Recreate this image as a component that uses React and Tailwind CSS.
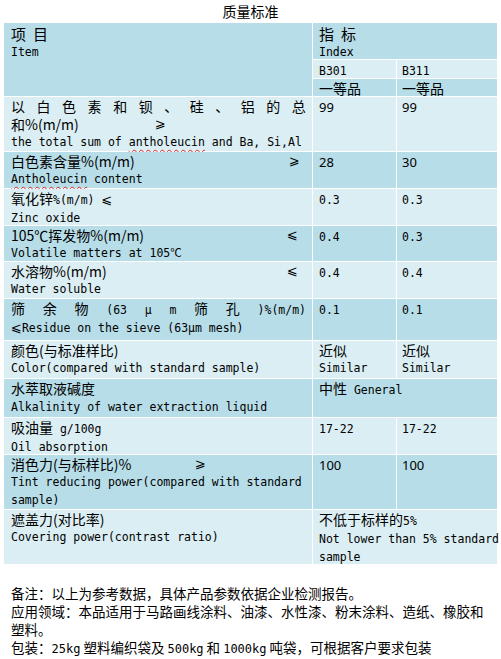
const D = "bg-[#b7dde8]";
const L = "bg-[#dbeef3]";
const cn = "font-['Noto_Sans_CJK_SC',sans-serif] text-[14px]";
const mono = "font-['DejaVu_Sans_Mono','Noto_Sans_CJK_SC',monospace] text-[11.5px]";
const sans = "font-['Noto_Sans','Noto_Sans_CJK_SC',sans-serif] text-[13px]";
const sym = "font-['DejaVu_Sans',sans-serif] text-[13px]";
const wavy = "underline decoration-wavy decoration-[#d22] decoration-1 underline-offset-[3px]";

function C1({ bg, h, children }) {
  return <div className={`${bg} ${h} pl-[7px] pr-[6px] leading-[18px]`}>{children}</div>;
}
function C2({ bg, h, children }) {
  return <div className={`${bg} ${h} pl-[6px] leading-[18px]`}>{children}</div>;
}
function C3({ bg, h, children }) {
  return <div className={`${bg} ${h} pl-[5px] leading-[18px]`}>{children}</div>;
}

export default function App() {
  const r1 = ["以", "白", "色", "素", "和", "钡", "、", "硅", "、", "铝", "的", "总"];
  return (
    <div className="w-[501px] h-[659px] bg-white text-black">
      <div className={`h-[23px] flex items-center justify-center ${cn}`}>质量标准</div>
      <div className="mx-[4px] grid grid-cols-[308px_83px_100px] gap-x-[1px] gap-y-[1px]">
        {/* header */}
        <div className={`${D} row-span-3 pl-[7px] leading-[19px]`}>
          <div className={`${cn} text-[15px] pt-[1px] flex gap-[7px]`}>
            <span>项</span>
            <span>目</span>
          </div>
          <div className={mono}>Item</div>
        </div>
        <div className={`${D} col-span-2 h-[36px] pl-[6px] leading-[19px]`}>
          <div className={`${cn} text-[15px] pt-[1px] flex gap-[7px]`}>
            <span>指</span>
            <span>标</span>
          </div>
          <div className={mono}>Index</div>
        </div>
        <C2 bg={L} h="h-[18px]"><span className={mono}>B301</span></C2>
        <C3 bg={L} h="h-[18px]"><span className={mono}>B311</span></C3>
        <C2 bg={D} h="h-[17px]"><span className={`${cn} leading-[17px]`}>一等品</span></C2>
        <C3 bg={D} h="h-[17px]"><span className={`${cn} leading-[17px]`}>一等品</span></C3>

        {/* r1 */}
        <C1 bg={L} h="h-[54px]">
          <div className={`flex justify-between ${cn}`}>
            {r1.map((c, i) => (
              <span key={i}>{c}</span>
            ))}
          </div>
          <div className="flex">
            <span className={`${cn} w-[144px]`}>和%(m/m)</span>
            <span className={sym}>⩾</span>
          </div>
          <div className={`${mono} whitespace-nowrap`}>
            the total sum of <span className={wavy}>antholeucin</span> and Ba, Si,Al
          </div>
        </C1>
        <C2 bg={L} h="h-[54px]"><span className={sans}>99</span></C2>
        <C3 bg={L} h="h-[54px]"><span className={sans}>99</span></C3>

        {/* r2 */}
        <C1 bg={D} h="h-[36px]">
          <div className="flex justify-between pr-[6px]">
            <span className={cn}>白色素含量%(m/m)</span>
            <span className={sym}>⩾</span>
          </div>
          <div className={mono}>
            <span className={wavy}>Antholeucin</span> content
          </div>
        </C1>
        <C2 bg={D} h="h-[36px]"><span className={sans}>28</span></C2>
        <C3 bg={D} h="h-[36px]"><span className={sans}>30</span></C3>

        {/* r3 */}
        <C1 bg={L} h="h-[36px]">
          <div>
            <span className={cn}>氧化锌</span>
            <span className={mono}>%(m/m) </span>
            <span className={sym}>⩽</span>
          </div>
          <div className={mono}>Zinc oxide</div>
        </C1>
        <C2 bg={L} h="h-[36px]"><span className={mono}>0.3</span></C2>
        <C3 bg={L} h="h-[36px]"><span className={mono}>0.3</span></C3>

        {/* r4 */}
        <C1 bg={D} h="h-[35px]">
          <div className="flex justify-between pr-[8px]">
            <span className={cn}>105℃挥发物%(m/m)</span>
            <span className={sym}>⩽</span>
          </div>
          <div className={mono}>Volatile matters at 105℃</div>
        </C1>
        <C2 bg={D} h="h-[35px]"><span className={mono}>0.4</span></C2>
        <C3 bg={D} h="h-[35px]"><span className={mono}>0.3</span></C3>

        {/* r5 */}
        <C1 bg={L} h="h-[36px]">
          <div className="flex justify-between pr-[8px]">
            <span className={cn}>水溶物%(m/m)</span>
            <span className={sym}>⩽</span>
          </div>
          <div className={mono}>Water soluble</div>
        </C1>
        <C2 bg={L} h="h-[36px]"><span className={mono}>0.4</span></C2>
        <C3 bg={L} h="h-[36px]"><span className={mono}>0.4</span></C3>

        {/* r6 */}
        <C1 bg={D} h="h-[41px]">
          <div className="flex justify-between items-baseline leading-[17px] pt-[1px]">
            <span className={cn}>筛</span>
            <span className={cn}>余</span>
            <span className={cn}>物</span>
            <span className={mono}>(63</span>
            <span className={mono}>μ</span>
            <span className={mono}>m</span>
            <span className={cn}>筛</span>
            <span className={cn}>孔</span>
            <span className={mono}>)%(m/m)</span>
          </div>
          <div className={`${mono} leading-[17px] whitespace-nowrap`}>
            <span className={sym}>⩽</span>Residue on the sieve (63μm mesh)
          </div>
        </C1>
        <C2 bg={D} h="h-[41px]"><span className={mono}>0.1</span></C2>
        <C3 bg={D} h="h-[41px]"><span className={mono}>0.1</span></C3>

        {/* r7 */}
        <C1 bg={L} h="h-[37px]">
          <div className={cn}>颜色(与标准样比)</div>
          <div className={`${mono} whitespace-nowrap`}>Color(compared with standard sample)</div>
        </C1>
        <C2 bg={L} h="h-[37px]">
          <div className={cn}>近似</div>
          <div className={mono}>Similar</div>
        </C2>
        <C3 bg={L} h="h-[37px]">
          <div className={cn}>近似</div>
          <div className={mono}>Similar</div>
        </C3>

        {/* r8 */}
        <C1 bg={D} h="h-[38px]">
          <div className={cn}>水萃取液碱度</div>
          <div className={`${mono} pt-[1px] whitespace-nowrap`}>Alkalinity of water extraction liquid</div>
        </C1>
        <div className={`${D} col-span-2 h-[38px] pl-[6px] leading-[18px]`}>
          <span className={cn}>中性</span>
          <span className={mono}> General</span>
        </div>

        {/* r9 */}
        <C1 bg={L} h="h-[36px]">
          <div>
            <span className={cn}>吸油量</span>
            <span className={mono}> g/100g</span>
          </div>
          <div className={mono}>Oil absorption</div>
        </C1>
        <C2 bg={L} h="h-[36px]"><span className={mono}>17-22</span></C2>
        <C3 bg={L} h="h-[36px]"><span className={mono}>17-22</span></C3>

        {/* r10 */}
        <C1 bg={D} h="h-[54px]">
          <div className="flex">
            <span className={`${cn} w-[184px]`}>消色力(与标样比)%</span>
            <span className={sym}>⩾</span>
          </div>
          <div className={`${mono} whitespace-nowrap`}>Tint reducing power(compared with standard</div>
          <div className={mono}>sample)</div>
        </C1>
        <C2 bg={D} h="h-[54px]"><span className={sans}>100</span></C2>
        <C3 bg={D} h="h-[54px]"><span className={sans}>100</span></C3>

        {/* r11 */}
        <C1 bg={L} h="h-[54px]">
          <div className={cn}>遮盖力(对比率)</div>
          <div className={mono}>Covering power(contrast ratio)</div>
        </C1>
        <div className={`${L} col-span-2 h-[54px] pl-[6px] leading-[18px]`}>
          <div>
            <span className={cn}>不低于标样的</span>
            <span className={mono}>5%</span>
          </div>
          <div className={`${mono} whitespace-nowrap`}>Not lower than 5% standard</div>
          <div className={mono}>sample</div>
        </div>
      </div>

      <div className="mt-[20px] pl-[11px] w-[491px] font-['Noto_Sans_CJK_SC',sans-serif] text-[13.5px] leading-[18px]">
        <div>备注：以上为参考数据，具体产品参数依据企业检测报告。</div>
        <div>应用领域：本品适用于马路画线涂料、油漆、水性漆、粉末涂料、造纸、橡胶和塑料。</div>
        <div>
          包装：<span className="font-['DejaVu_Sans_Mono',monospace] text-[12px]">25kg</span> 塑料编织袋及{" "}
          <span className="font-['DejaVu_Sans_Mono',monospace] text-[12px]">500kg</span> 和{" "}
          <span className="font-['DejaVu_Sans_Mono',monospace] text-[12px]">1000kg</span> 吨袋，可根据客户要求包装
        </div>
      </div>
    </div>
  );
}
